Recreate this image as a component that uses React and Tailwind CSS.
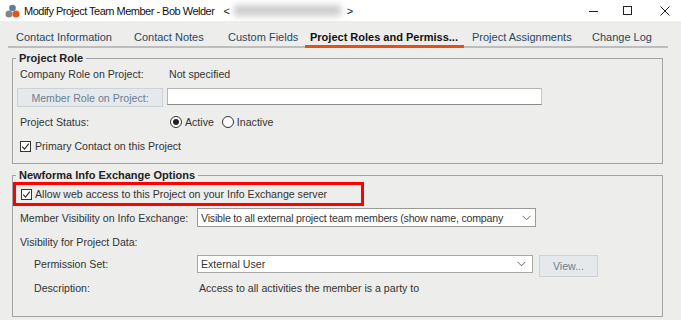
import React from 'react'

const tabs = [
  { label: 'Contact Information', w: 'w-[118px]' },
  { label: 'Contact Notes', w: 'w-[94px]' },
  { label: 'Custom Fields', w: 'w-[85px]' },
  { label: 'Project Roles and Permiss...', w: 'w-[159px]', active: true },
  { label: 'Project Assignments', w: 'w-[120px]' },
  { label: 'Change Log', w: 'w-[84px]' },
]

function Logo() {
  return (
    <svg width="15" height="14" viewBox="0 0 15 14">
      <circle cx="7.5" cy="4" r="3.3" fill="#5f7d9b" />
      <circle cx="4" cy="10" r="3.5" fill="#858585" />
      <circle cx="11" cy="10" r="3.5" fill="#e0541c" />
    </svg>
  )
}

function Checkbox() {
  return (
    <div className="w-[11px] h-[11px] border border-[#333] bg-white flex items-center justify-center shrink-0">
      <svg width="9" height="9" viewBox="0 0 9 9">
        <path d="M1.2 4.6 L3.5 7 L7.8 1.6" fill="none" stroke="#333" strokeWidth="1.2" />
      </svg>
    </div>
  )
}

function Radio({ checked }) {
  return (
    <div className="w-[12px] h-[12px] rounded-full border border-[#333] bg-white flex items-center justify-center shrink-0">
      {checked && <div className="w-[6px] h-[6px] rounded-full bg-[#222]" />}
    </div>
  )
}

function Chevron() {
  return (
    <svg width="9" height="6" viewBox="0 0 9 6">
      <path d="M0.5 0.8 L4.5 4.8 L8.5 0.8" fill="none" stroke="#666" strokeWidth="1" />
    </svg>
  )
}

export default function App() {
  return (
    <div className="w-[681px] h-[320px] overflow-hidden bg-[#ededec] text-[10.6px] leading-[14px] text-[#333] font-['Liberation_Sans',sans-serif]">
      {/* Title bar */}
      <div className="h-[21px] bg-white flex items-center pl-[5px] text-[11px] text-[#111]">
        <Logo />
        <span className="ml-[4px] tracking-[-0.5px]">Modify Project Team Member - Bob Welder</span>
        <span className="ml-[9px]">&lt;</span>
        <div className="ml-[4px] w-[107px] h-[11px] bg-[#cdcdcd] blur-[3px]" />
        <span className="ml-[6px]">&gt;</span>
        <div className="ml-auto flex items-center h-full">
          <div className="w-[24px] flex justify-center">
            <svg width="9" height="9" viewBox="0 0 9 9"><path d="M0 5.5 H9" stroke="#222" strokeWidth="1" /></svg>
          </div>
          <div className="w-[44px] flex justify-center">
            <svg width="9" height="9" viewBox="0 0 9 9"><rect x="0.5" y="0.5" width="8" height="8" fill="none" stroke="#222" strokeWidth="1" /></svg>
          </div>
          <div className="w-[32px] flex justify-center">
            <svg width="10" height="10" viewBox="0 0 10 10"><path d="M0.5 0.5 L9.5 9.5 M9.5 0.5 L0.5 9.5" stroke="#222" strokeWidth="1" /></svg>
          </div>
        </div>
      </div>

      {/* Tabs */}
      <div className="flex ml-[8px] w-[660px] text-[11px]">
        {tabs.map((t) => (
          <div
            key={t.label}
            className={`${t.w} h-[27px] pt-[9px] whitespace-nowrap ${
              t.active
                ? 'pl-[5px] border-b-[3px] border-[#e2501c] font-bold text-[#111]'
                : 'pl-[8px] border-b-2 border-[#bdbdbd] text-[#2a4763]'
            }`}
          >
            {t.label}
          </div>
        ))}
      </div>

      {/* Project Role */}
      <fieldset className="mt-[3px] ml-[12px] w-[651px] border border-[#a3a3a3] p-0 pb-[8px]">
        <legend className="ml-[3px] px-[3px] font-bold text-[11px] text-[#222] leading-[14px]">Project Role</legend>
        <div className="h-[18px] flex items-center pl-[7px]">
          <div className="w-[149px]">Company Role on Project:</div>
          <div>Not specified</div>
        </div>
        <div className="mt-[5px] flex items-start pl-[4px]">
          <div className="w-[146px] h-[19px] bg-[#e6e9ec] border border-[#cdd2d7] flex items-center justify-center text-[#6b7f92]">
            Member Role on Project:
          </div>
          <div className="ml-[4px] w-[375px] h-[17px] bg-white border-t border-l border-[#b4b4b4] border-r border-b border-r-[#c8c8c8] border-b-[#8a8a8a]" />
        </div>
        <div className="mt-[6px] h-[18px] flex items-center pl-[7px]">
          <div className="w-[150px]">Project Status:</div>
          <Radio checked />
          <span className="ml-[3px]">Active</span>
          <div className="ml-[8px]"><Radio /></div>
          <span className="ml-[3px]">Inactive</span>
        </div>
        <div className="mt-[6px] h-[18px] flex items-center pl-[7px]">
          <Checkbox />
          <span className="ml-[4px]">Primary Contact on this Project</span>
        </div>
      </fieldset>

      {/* Newforma Info Exchange Options */}
      <fieldset className="mt-[4px] ml-[12px] w-[651px] border border-[#a3a3a3] p-0 pb-[19px]">
        <legend className="ml-[3px] px-[3px] font-bold text-[11px] text-[#222] leading-[14px]">Newforma Info Exchange Options</legend>
        <div className="w-[351px] h-[24px] border-[3px] border-[#ff0000] flex items-center pl-[5px]">
          <Checkbox />
          <span className="ml-[3px]">Allow web access to this Project on your Info Exchange server</span>
        </div>
        <div className="mt-[2px] flex items-center pl-[7px]">
          <div className="w-[177px]">Member Visibility on Info Exchange:</div>
          <div className="w-[339px] h-[19px] bg-white border border-[#9a9a9a] flex items-center pl-[3px] pr-[4px]">
            <span className="flex-1 overflow-hidden whitespace-nowrap tracking-[-0.2px]">Visible to all external project team members (show name, company</span>
            <span className="ml-[2px]"><Chevron /></span>
          </div>
        </div>
        <div className="mt-[6px] h-[18px] flex items-center pl-[7px]">Visibility for Project Data:</div>
        <div className="mt-[4px] flex items-start pl-[21px]">
          <div className="w-[163px] h-[18px] flex items-center">Permission Set:</div>
          <div className="w-[336px] h-[18px] bg-white border border-[#a8a8a8] flex items-center pl-[3px] pr-[6px]">
            <span className="flex-1">External User</span>
            <Chevron />
          </div>
          <div className="ml-[6px] w-[59px] h-[22px] bg-[#e6e9ec] border border-[#cdd2d7] flex items-center justify-center text-[#6b7f92]">
            View...
          </div>
        </div>
        <div className="mt-[2px] h-[18px] flex items-center pl-[21px]">
          <div className="w-[165px]">Description:</div>
          <div>Access to all activities the member is a party to</div>
        </div>
      </fieldset>
    </div>
  )
}
